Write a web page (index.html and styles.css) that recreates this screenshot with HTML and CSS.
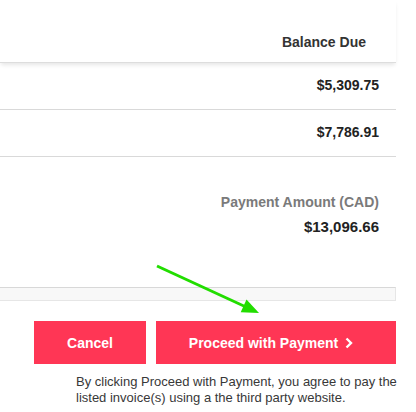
FILE: index.html
```html
<!DOCTYPE html>
<html>
<head>
<meta charset="utf-8">
<link rel="stylesheet" href="styles.css">
</head>
<body>
<div class="page">
  <div class="table">
    <div class="thead"><span>Balance Due</span></div>
    <div class="row"><span>$5,309.75</span></div>
    <div class="row"><span>$7,786.91</span></div>
  </div>
  <div class="total">
    <div class="label">Payment Amount (CAD)</div>
    <div class="amount">$13,096.66</div>
  </div>
  <div class="bar"></div>
  <div class="actions">
    <button class="btn cancel">Cancel</button>
    <button class="btn proceed"><span>Proceed with Payment</span><svg class="chev" width="8" height="12" viewBox="0 0 8 12"><path d="M1.5 1.5 L6 6 L1.5 10.5" fill="none" stroke="#fff" stroke-width="2.4"/></svg></button>
  </div>
  <p class="note">By clicking Proceed with Payment, you agree to pay the listed invoice(s) using a the third party website.</p>
  <svg class="arrow" width="416" height="412" viewBox="0 0 416 412">
    <line x1="157" y1="266" x2="246" y2="307" stroke="#22dd00" stroke-width="3"/>
    <polygon points="259,313 240.7,312.3 246.5,299.5" fill="#22dd00"/>
  </svg>
</div>
</body>
</html>
```
FILE: styles.css
```css
html, body {
  margin: 0;
  padding: 0;
  background: #fff;
}
.page {
  position: relative;
  width: 396px;
  height: 412px;
  font-family: "Liberation Sans", Arial, sans-serif;
  color: #222;
}
.thead {
  padding: 34px 30px 12px 0;
  line-height: 16px;
  font-size: 14px;
  font-weight: bold;
  color: #333;
  text-align: right;
  border-bottom: 1px solid #ddd;
  box-shadow: 0 3px 4px -1px rgba(0,0,0,0.10);
}
.row {
  padding: 14px 17px 16px 0;
  line-height: 16px;
  font-size: 14px;
  font-weight: bold;
  color: #222;
  text-align: right;
  border-bottom: 1px solid #d9d9d9;
}
.total {
  margin-top: 37px;
  padding-right: 17px;
  text-align: right;
  font-weight: bold;
}
.label {
  font-size: 14px;
  line-height: 16px;
  color: #7a7a7a;
}
.amount {
  margin-top: 8px;
  font-size: 15px;
  line-height: 18px;
  color: #222;
}
.bar {
  margin-top: 51px;
  height: 12px;
  background: #f8f8f8;
  border: 1px solid #e6e6e6;
  border-left: 0;
  border-top-color: #d8d8d8;
}
.actions {
  margin-top: 20px;
  display: flex;
  gap: 10px;
  padding-left: 34px;
}
.btn {
  height: 43px;
  border: 0;
  margin: 0;
  background: #ff3655;
  color: #fff;
  font-family: "Liberation Sans", Arial, sans-serif;
  font-size: 14px;
  font-weight: bold;
  display: flex;
  align-items: center;
  justify-content: center;
  padding: 0;
}
.cancel {
  width: 112px;
}
.proceed {
  width: 240px;
  padding-right: 10px;
  gap: 7px;
}
.chev {
  display: block;
}
.note {
  margin: 10px -12px 0 0;
  padding-left: 76px;
  font-size: 13px;
  line-height: 16px;
  color: #383838;
}
.arrow {
  position: absolute;
  top: 0;
  left: 0;
  pointer-events: none;
}
```
